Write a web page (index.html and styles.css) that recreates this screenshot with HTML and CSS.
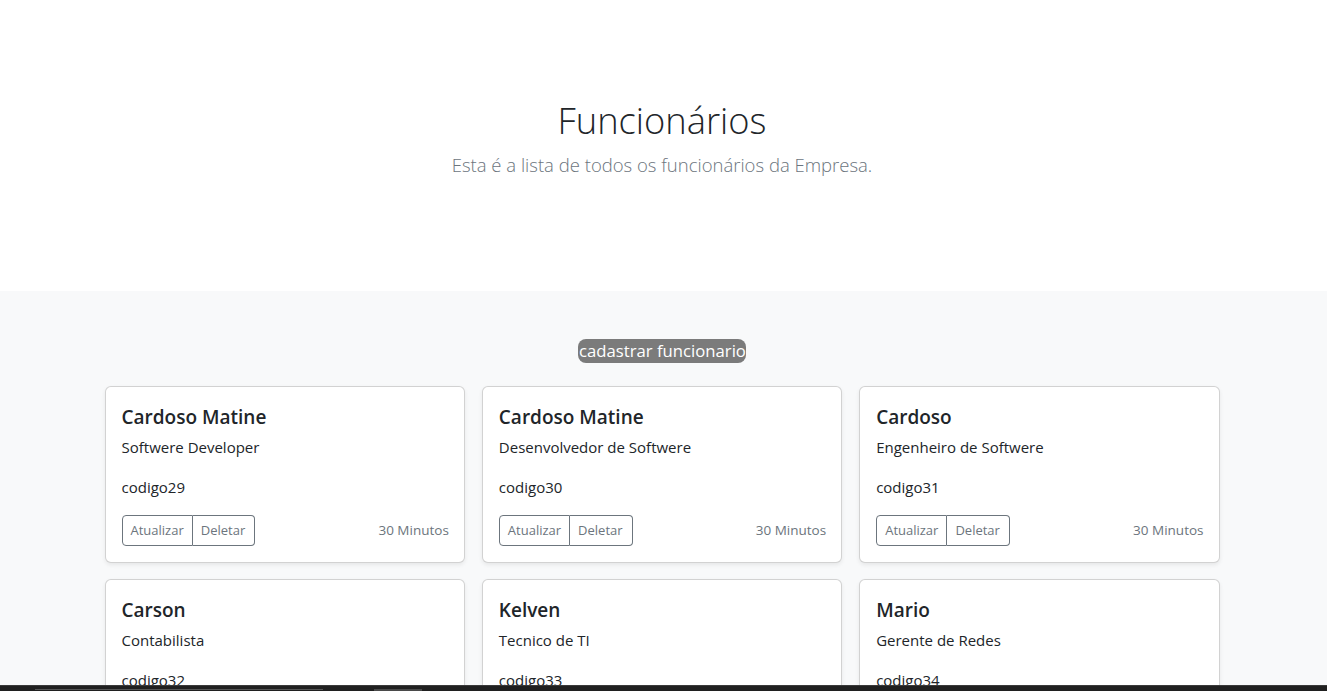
FILE: index.html
```html
<!DOCTYPE html>
<html lang="pt">
<head>
<meta charset="utf-8">
<title>Funcionários</title>
<link rel="stylesheet" href="styles.css">
</head>
<body>
<main>
  <section class="hero">
    <h1 class="hero-title">Funcionários</h1>
    <p class="hero-lead">Esta é a lista de todos os funcionários da Empresa.</p>
  </section>
  <div class="album">
    <div class="album-top">
      <button class="add-btn" type="button">cadastrar funcionario</button>
    </div>
    <div class="grid">
      <div class="card">
        <h5 class="card-title">Cardoso Matine</h5>
        <p class="card-text">Softwere Developer</p>
        <p class="card-code">codigo29</p>
        <div class="card-foot">
          <div class="btn-group"><button class="btn">Atualizar</button><button class="btn">Deletar</button></div>
          <small class="muted">30 Minutos</small>
        </div>
      </div>
      <div class="card">
        <h5 class="card-title">Cardoso Matine</h5>
        <p class="card-text">Desenvolvedor de Softwere</p>
        <p class="card-code">codigo30</p>
        <div class="card-foot">
          <div class="btn-group"><button class="btn">Atualizar</button><button class="btn">Deletar</button></div>
          <small class="muted">30 Minutos</small>
        </div>
      </div>
      <div class="card">
        <h5 class="card-title">Cardoso</h5>
        <p class="card-text">Engenheiro de Softwere</p>
        <p class="card-code">codigo31</p>
        <div class="card-foot">
          <div class="btn-group"><button class="btn">Atualizar</button><button class="btn">Deletar</button></div>
          <small class="muted">30 Minutos</small>
        </div>
      </div>
      <div class="card">
        <h5 class="card-title">Carson</h5>
        <p class="card-text">Contabilista</p>
        <p class="card-code">codigo32</p>
        <div class="card-foot">
          <div class="btn-group"><button class="btn">Atualizar</button><button class="btn">Deletar</button></div>
          <small class="muted">30 Minutos</small>
        </div>
      </div>
      <div class="card">
        <h5 class="card-title">Kelven</h5>
        <p class="card-text">Tecnico de TI</p>
        <p class="card-code">codigo33</p>
        <div class="card-foot">
          <div class="btn-group"><button class="btn">Atualizar</button><button class="btn">Deletar</button></div>
          <small class="muted">30 Minutos</small>
        </div>
      </div>
      <div class="card">
        <h5 class="card-title">Mario</h5>
        <p class="card-text">Gerente de Redes</p>
        <p class="card-code">codigo34</p>
        <div class="card-foot">
          <div class="btn-group"><button class="btn">Atualizar</button><button class="btn">Deletar</button></div>
          <small class="muted">30 Minutos</small>
        </div>
      </div>
    </div>
  </div>
</main>
<div class="taskbar">
  <span class="tb-seg tb-seg-a"></span>
  <span class="tb-seg tb-seg-b"></span>
</div>
</body>
</html>
```
FILE: styles.css
```css
* { box-sizing: border-box; }
html, body { margin: 0; padding: 0; }
body {
  font-family: "Open Sans", "Noto Sans", sans-serif;
  font-size: 16px;
  line-height: 1.5;
  color: #212529;
  background: #fff;
}
.hero {
  text-align: center;
  padding: 96px 3px 111px 0;
}
.hero-title {
  margin: 0 0 6px;
  font-size: 36.3px;
  font-weight: 300;
  line-height: 48px;
}
.hero-lead {
  margin: 0;
  font-size: 18.5px;
  font-weight: 300;
  line-height: 30px;
  color: #6c757d;
}
.album {
  background: #f8f9fa;
  padding: 48px 3px 48px 0;
}
.album-top {
  display: flex;
  justify-content: center;
  margin: 0 0 23px;
}
.add-btn {
  font-family: inherit;
  font-size: 16.7px;
  line-height: 24px;
  height: 24px;
  padding: 0 0 0 1px;
  border: none;
  border-radius: 8px;
  background: #7b7b7b;
  color: #fff;
}
.grid {
  width: 1115px;
  margin: 0 auto;
  display: grid;
  grid-template-columns: repeat(3, 1fr);
  column-gap: 17px;
  row-gap: 16px;
}
.card {
  background: #fff;
  border: 1px solid rgba(0,0,0,.175);
  border-radius: 6px;
  box-shadow: 0 2px 4px rgba(0,0,0,.075);
  padding: 16px 15px 16px 16px;
}
.card-title {
  margin: 0 0 6px;
  padding-top: 2px;
  font-size: 19px;
  font-weight: 600;
  line-height: 24px;
}
.card-text {
  margin: 0 0 16px;
  font-size: 15px;
  line-height: 24px;
}
.card-code {
  margin: 0 0 16px;
  font-size: 15px;
  line-height: 24px;
}
.card-foot {
  display: flex;
  justify-content: space-between;
  align-items: center;
}
.btn-group { display: flex; }
.btn {
  font-family: inherit;
  font-size: 13px;
  line-height: 21px;
  padding: 4px 8px;
  background: transparent;
  color: #6c757d;
  border: 1px solid #6c757d;
}
.btn:first-child { border-radius: 4px 0 0 4px; }
.btn:last-child { border-radius: 0 4px 4px 0; border-left: none; padding-right: 9px; }
.muted {
  font-size: 13.5px;
  color: #6c757d;
}
.taskbar {
  position: fixed;
  left: 0;
  right: 0;
  bottom: 0;
  height: 6px;
  background: #202020;
  border-top: 1px solid #3a3a3a;
}
.tb-seg {
  position: absolute;
  top: 3px;
  height: 3px;
}
.tb-seg-a { left: 35px; width: 288px; border-top: 1px solid #555; }
.tb-seg-b { left: 374px; width: 48px; background: #4a4a4a; }
```
